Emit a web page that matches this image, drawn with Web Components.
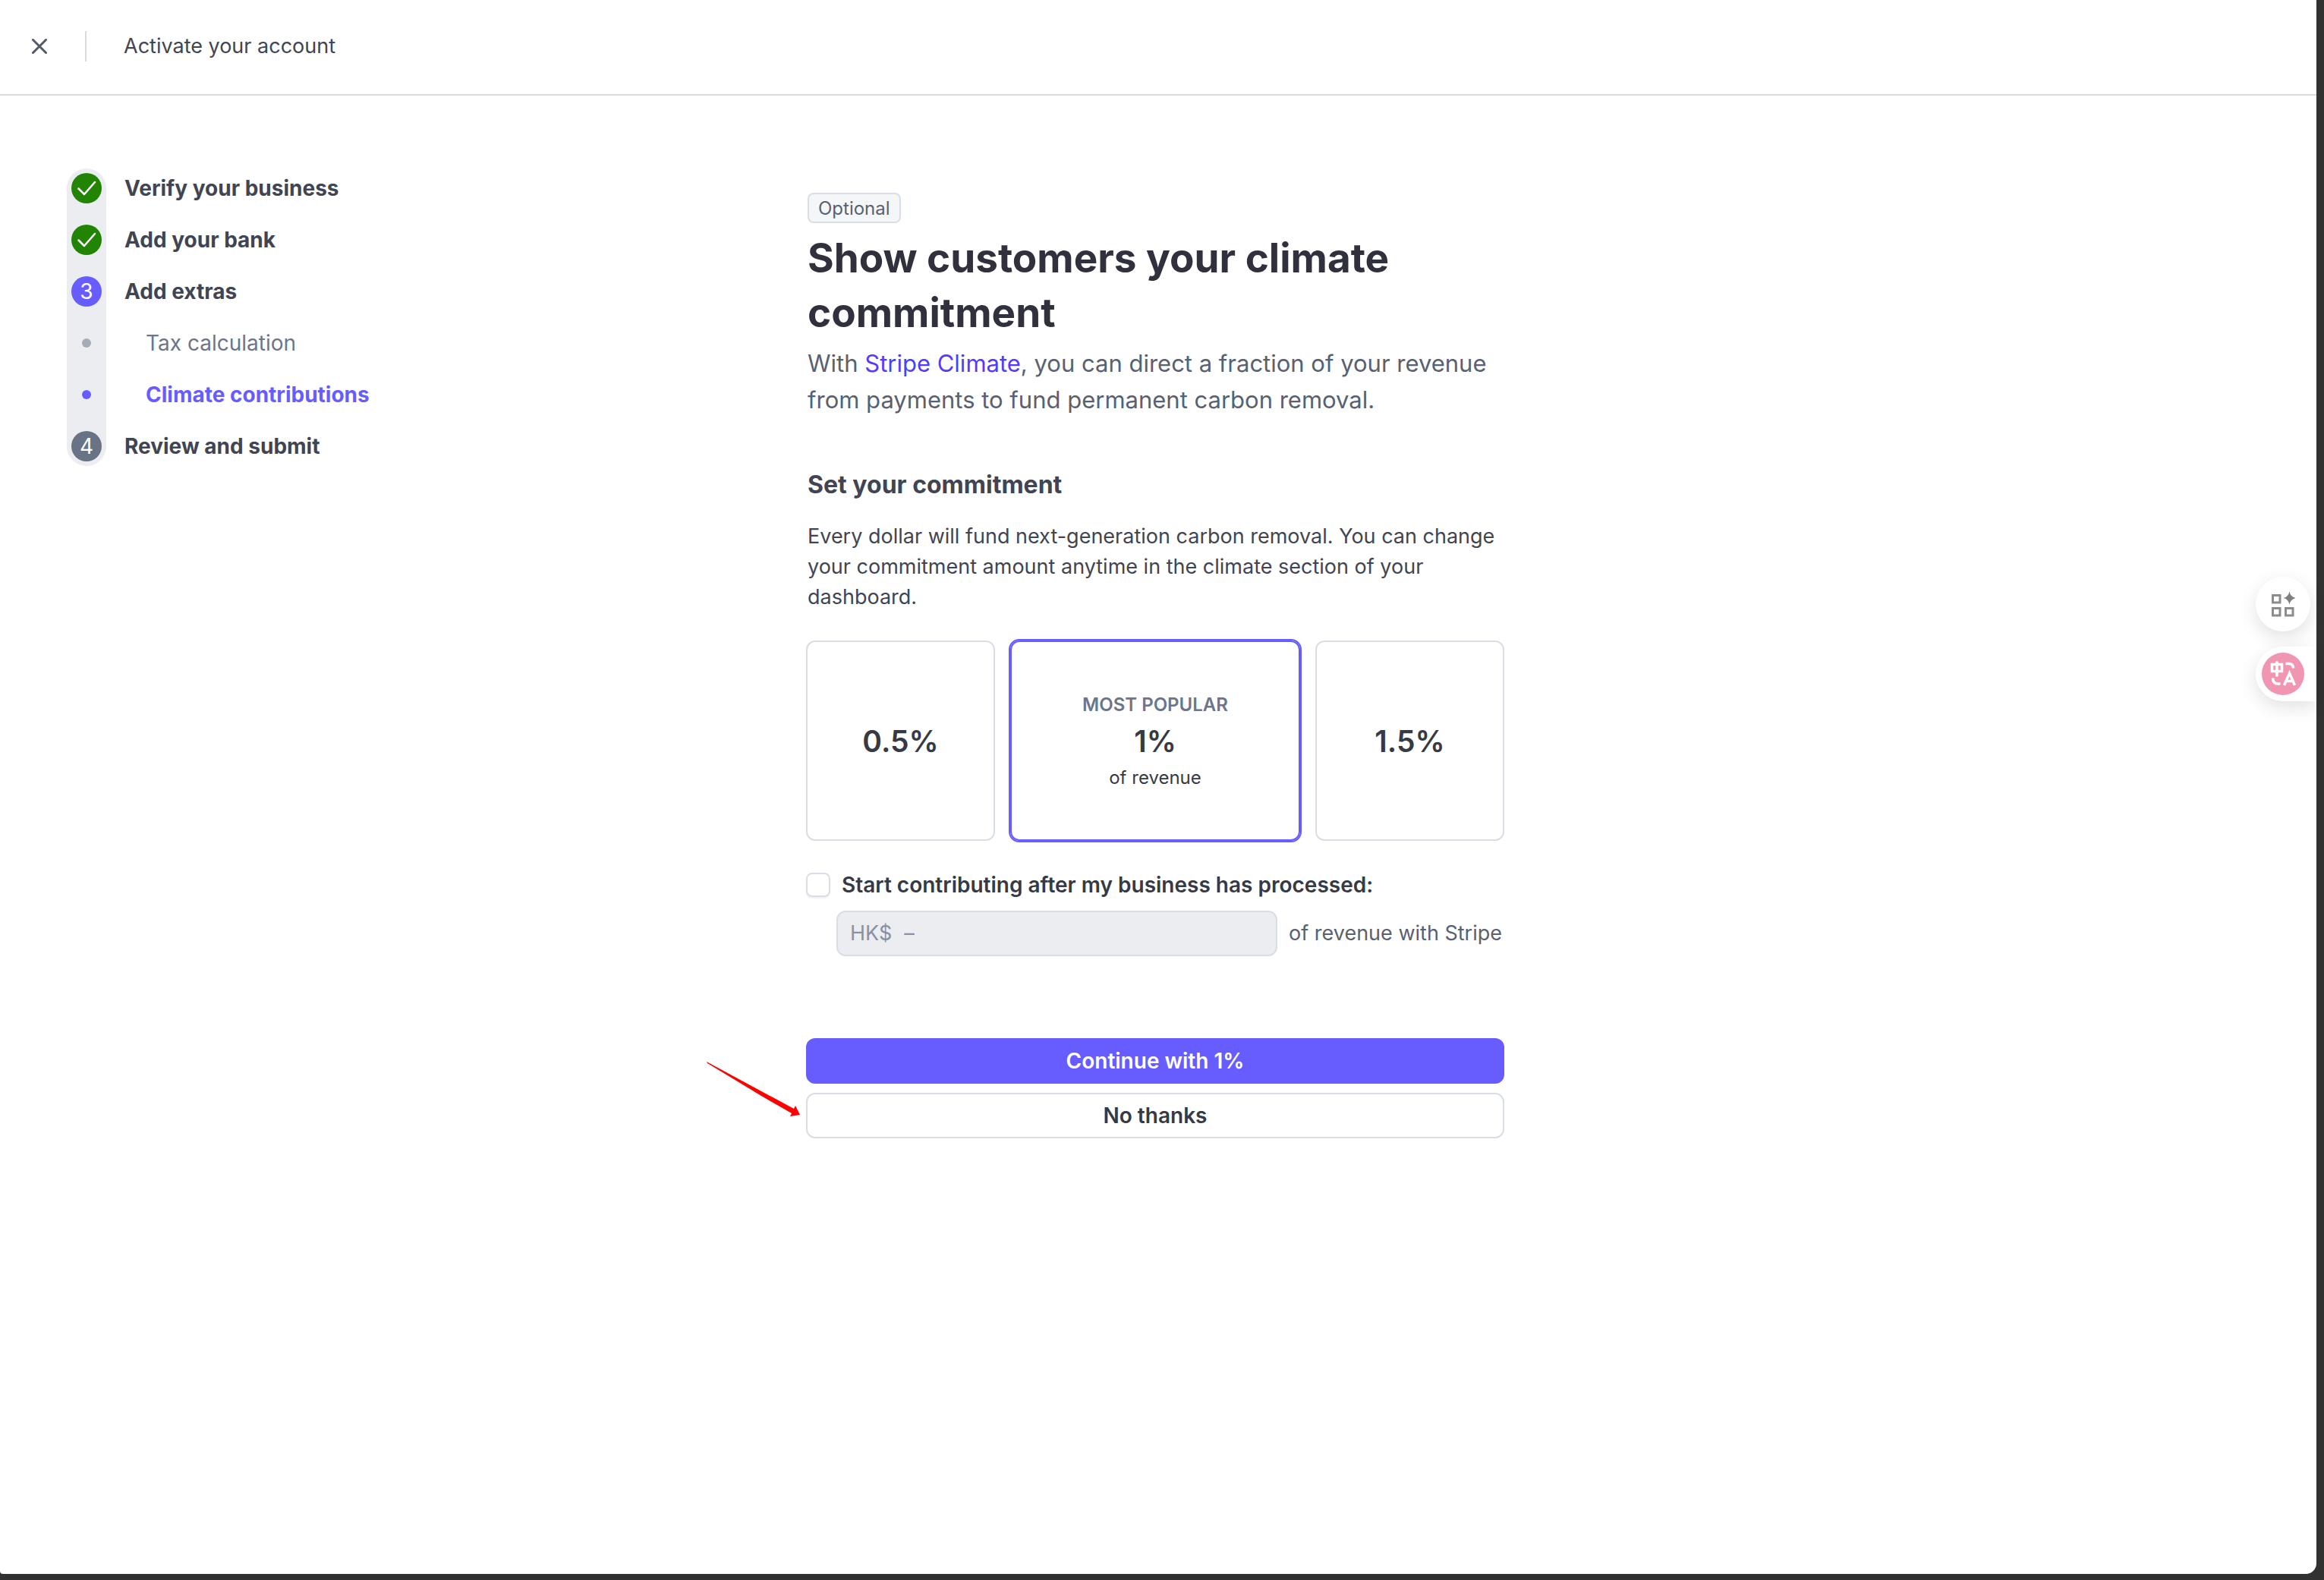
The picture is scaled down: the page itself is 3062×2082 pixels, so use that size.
<!DOCTYPE html>
<html lang="en">
<head>
<meta charset="utf-8">
<title>Activate your account</title>
<style>
  html, body { margin: 0; min-height: 100%; }
  body {
    background: #303130;
    font-family: Inter, "Noto Sans", sans-serif;
    font-size: 27px;
    line-height: 40px;
    color: #414552;
    --accent: #675dff;
    --border: #d8dee4;
    --text: #353a44;
    --muted: #596171;
  }
</style>
</head>
<body>
<activation-page></activation-page>
<script>
const define = (name, html, setup) => {
  const template = document.createElement('template');
  template.innerHTML = html;
  customElements.define(name, class extends HTMLElement {
    constructor() {
      super();
      this.attachShadow({ mode: 'open' }).append(template.content.cloneNode(true));
    }
    connectedCallback() { if (setup) setup(this, this.shadowRoot); }
  });
};

define('page-header', `
  <style>
    :host { display: flex; align-items: center; height: 122px; padding-bottom: 2px; border-bottom: 2px solid #d9dcdf; }
    button { display: flex; padding: 0; margin: 0 50px 0 42px; border: 0; background: none; }
    svg { width: 20px; height: 20px; }
    .title { border-left: 2px solid #d9dcdf; padding-left: 49px; }
    h2 { margin: 0; font-size: 27px; line-height: 40px; font-weight: 400; }
  </style>
  <button type="button" aria-label="Close">
    <svg viewBox="0 0 20 20" fill="none" stroke="#545969" stroke-width="3" stroke-linecap="round"><path d="M1.500 1.500l17 17M18.500 1.500l-17 17"/></svg>
  </button>
  <div class="title"><h2><slot></slot></h2></div>
`);

define('step-item', `
  <style>
    :host { display: flex; align-items: center; height: 40px; gap: 30px; font-size: 28px; font-weight: 700; }
    .mark { width: 40px; height: 40px; border-radius: 50%; display: flex; align-items: center; justify-content: center; color: #fff; font-weight: 400; }
    .mark svg { width: 40px; height: 40px; }
    :host([state="done"]) .mark { background: #228403; }
    :host([state="current"]) .mark { background: var(--accent); }
    :host([state="next"]) .mark { background: #687385; }
    :host([sub]) { gap: 72px; font-weight: 400; color: #6c7688; }
    :host([sub]) .mark { width: 12px; height: 12px; margin-left: 14px; background: #a5abb7; }
    :host([sub][state="current"]) { color: var(--accent); font-weight: 700; }
    :host([sub][state="current"]) .mark { background: var(--accent); }
  </style>
  <span class="mark"></span><slot></slot>
`, (host, root) => {
  const mark = root.querySelector('.mark');
  if (host.getAttribute('state') === 'done') {
    mark.innerHTML = '<svg viewBox="0 0 40 40" fill="none" stroke="#fff" stroke-width="2.5" stroke-linecap="round" stroke-linejoin="round"><path d="M9.500 20.500L17 28L31 12"/></svg>';
  } else {
    mark.textContent = host.getAttribute('number') || '';
  }
});

define('step-list', `
  <style>
    :host { display: block; }
    nav { position: relative; display: flex; flex-direction: column; gap: 28px; padding: 6px; }
    .rail { position: absolute; left: 0; top: 0; bottom: 0; width: 52px; border-radius: 26px; background: #ebedf1; }
    ::slotted(*) { position: relative; }
  </style>
  <nav aria-label="Steps"><span class="rail"></span><slot></slot></nav>
`);

define('commitment-options', `
  <style>
    :host { display: block; }
    fieldset { border: 0; margin: 0; padding: 0; display: grid; grid-template-columns: 249fr 382fr 249fr; gap: 20px; }
    label { position: relative; display: flex; flex-direction: column; align-items: center; justify-content: center; gap: 4px; height: 264px; box-sizing: border-box; padding-top: 2px; border: 2px solid var(--border); border-radius: 12px; color: var(--text); }
    label:has(:checked) { border-color: var(--accent); outline: 2px solid var(--accent); }
    input { position: absolute; inset: 0; margin: 0; opacity: 0; }
    small { font-size: 24px; line-height: 40px; }
    .tag { font-weight: 600; color: #6c7688; text-transform: uppercase; }
    b { font-size: 39px; line-height: 48px; font-weight: 600; }
  </style>
  <fieldset aria-label="Commitment">
    <label><input type="radio" name="rate"><b>0.5%</b></label>
    <label><input type="radio" name="rate" checked><small class="tag">Most popular</small><b>1%</b><small>of revenue</small></label>
    <label><input type="radio" name="rate"><b>1.5%</b></label>
  </fieldset>
`);

define('revenue-threshold', `
  <style>
    :host { display: block; }
    .check { display: flex; align-items: center; gap: 15px; color: var(--text); font-size: 28px; font-weight: 600; }
    .check input { appearance: none; width: 32px; height: 32px; margin: 0; border: 2px solid var(--border); border-radius: 8px; background: #fff; box-shadow: 0 2px 2px rgba(0,0,0,.06); }
    .amount { display: flex; align-items: center; gap: 15px; margin: 14px 0 0 40px; padding-right: 3px; color: var(--muted); }
    .field { flex: 1; min-width: 0; display: flex; align-items: center; gap: 16px; height: 60px; box-sizing: border-box; padding: 0 16px; border: 2px solid var(--border); border-radius: 12px; background: #ebedf1; color: #8792a2; }
    .field input { flex: 1; min-width: 0; padding: 0; border: 0; background: none; font: inherit; color: inherit; }
    .unit { white-space: nowrap; }
  </style>
  <div class="check"><input type="checkbox" id="defer"><label for="defer">Start contributing after my business has processed:</label></div>
  <div class="amount">
    <div class="field"><label for="amount">HK$</label><input id="amount" type="text" value="–" disabled></div>
    <span class="unit">of revenue with Stripe</span>
  </div>
`);

define('wide-button', `
  <style>
    :host { display: block; }
    button { display: block; width: 100%; height: 60px; padding: 0; border: 2px solid var(--border); border-radius: 12px; background: #fff; font: 600 28px/40px Inter, "Noto Sans", sans-serif; color: var(--text); }
    :host([primary]) button { background: var(--accent); border-color: var(--accent); color: #fff; }
  </style>
  <button type="button"><slot></slot></button>
`);

define('pointer-arrow', `
  <style>
    :host { display: block; width: 124px; height: 74px; }
    svg { display: block; width: 100%; height: 100%; overflow: visible; }
  </style>
  <svg viewBox="0 0 124 74" aria-hidden="true"><path d="M-1 -1L114 61L116 57L122 69L109 71L111 67L71 44L0 1Z" fill="#fe0000"/></svg>
`);

define('climate-form', `
  <style>
    :host { display: block; }
    .intro { padding-left: 2px; }
    .badge { display: inline-block; box-sizing: border-box; height: 40px; padding: 0 12px; border: 2px solid var(--border); border-radius: 8px; background: #f5f6f8; color: var(--muted); font-size: 24px; line-height: 38px; vertical-align: top; }
    h1 { margin: 10px 0 7px; font-size: 53px; line-height: 72px; font-weight: 700; color: #30313d; }
    .lead { margin: 0; font-size: 31px; line-height: 48px; color: var(--muted); }
    a { color: #533afd; text-decoration: none; }
    h2 { margin: 64px 0 24px; font-size: 32px; line-height: 48px; font-weight: 700; }
    .note { margin: 0 0 37px; }
    revenue-threshold { margin: 38px 0 108px; }
    .actions { display: grid; gap: 12px; }
    .decline { position: relative; }
    pointer-arrow { position: absolute; right: calc(100% + 6px); top: -40px; }
  </style>
  <div class="intro">
    <span class="badge">Optional</span>
    <h1>Show customers your climate commitment</h1>
    <p class="lead">With <a href="#climate">Stripe Climate</a>, you can direct a fraction of your revenue from payments to fund permanent carbon removal.</p>
    <h2>Set your commitment</h2>
    <p class="note">Every dollar will fund next-generation carbon removal. You can change your commitment amount anytime in the climate section of your dashboard.</p>
  </div>
  <commitment-options></commitment-options>
  <revenue-threshold></revenue-threshold>
  <div class="actions">
    <wide-button primary>Continue with 1%</wide-button>
    <div class="decline"><wide-button>No thanks</wide-button><pointer-arrow></pointer-arrow></div>
  </div>
`);

define('floating-tools', `
  <style>
    :host { display: flex; flex-direction: column; gap: 20px; width: 80px; }
    button { display: flex; align-items: center; padding: 0; border: 0; height: 72px; background: #fff; box-shadow: 0 8px 24px rgba(0,0,0,.12); }
    .apps { width: 72px; border-radius: 36px; justify-content: center; }
    .translate { width: 80px; padding-left: 8px; border-radius: 36px 0 0 36px; }
    .apps svg { width: 32px; height: 36px; }
    .translate svg { width: 56px; height: 56px; }
  </style>
  <button type="button" class="apps" aria-label="Apps">
    <svg viewBox="0 0 32 36" fill="none" stroke="#8c8c8c" stroke-width="3"><rect x="2.500" y="6.500" width="9.500" height="9.500"/><rect x="2.500" y="23.500" width="9.500" height="9.500"/><rect x="19.500" y="23.500" width="9.500" height="9.500"/><path d="M24.500 1.500q1.500 7 8 8.500q-6.500 1.500-8 8.500q-1.500-7-8-8.500q6.500-1.500 8-8.500z" fill="#808080" stroke="none"/></svg>
  </button>
  <button type="button" class="translate" aria-label="Translate">
    <svg viewBox="0 0 56 56" fill="none" stroke="#fff" stroke-width="3.500"><circle cx="28" cy="28" r="28" fill="#f096b2" stroke="none"/><path d="M13.500 15.500h13v9h-13zM20 11.500v20M31.500 14.500h4q6 0 6 6M14.500 33.500q0 7.500 7 7.500h3M29.500 43l7-16 7 16M32.500 37.500h8"/></svg>
  </button>
`);

define('activation-page', `
  <style>
    :host { display: flex; min-height: 100vh; box-sizing: border-box; padding: 0 10px 8px 0; }
    .sheet { position: relative; flex: 1; background: #fff; border-radius: 0 0 14px 4px; }
    .columns { display: grid; grid-template-columns: 1fr minmax(0, 920px) 1fr; padding-right: 8px; }
    step-list { margin: 96px 0 0 88px; }
    climate-form { margin-top: 128px; }
    floating-tools { position: absolute; right: 0; top: 760px; }
  </style>
  <div class="sheet">
    <page-header>Activate your account</page-header>
    <div class="columns">
      <step-list>
        <step-item state="done">Verify your business</step-item>
        <step-item state="done">Add your bank</step-item>
        <step-item state="current" number="3">Add extras</step-item>
        <step-item sub>Tax calculation</step-item>
        <step-item sub state="current">Climate contributions</step-item>
        <step-item state="next" number="4">Review and submit</step-item>
      </step-list>
      <climate-form></climate-form>
    </div>
    <floating-tools></floating-tools>
  </div>
`);
</script>
</body>
</html>
